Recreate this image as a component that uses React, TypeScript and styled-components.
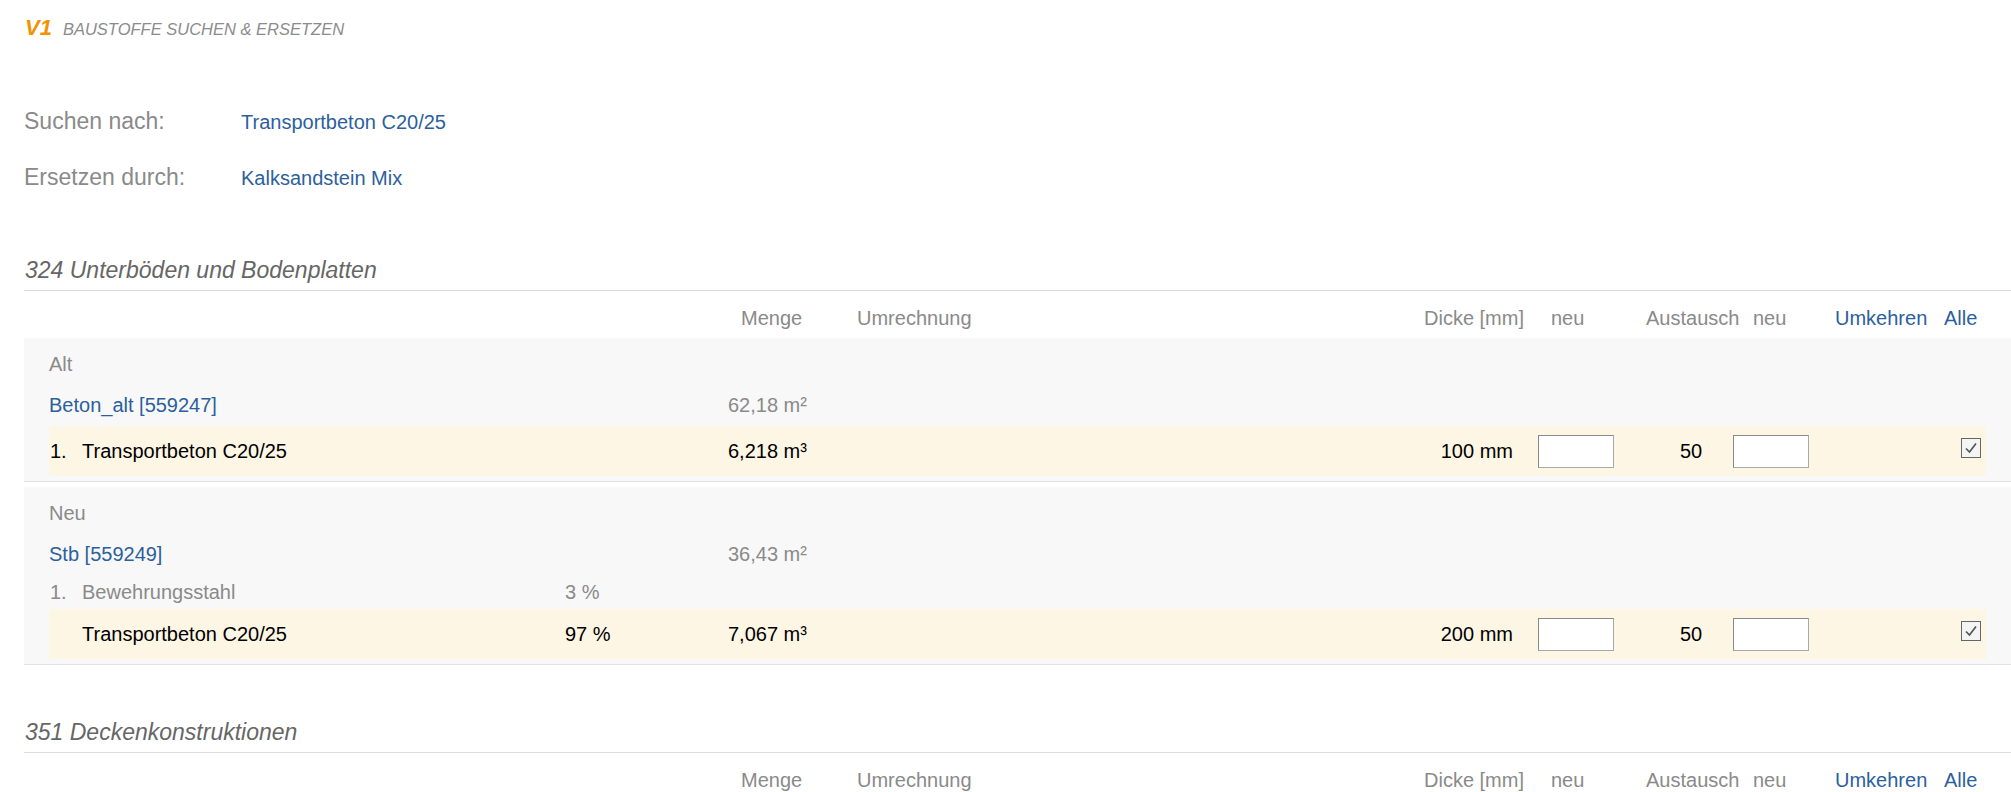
import React from "react";
import styled, { createGlobalStyle } from "styled-components";

const GlobalStyle = createGlobalStyle`
  html, body {
    margin: 0;
    padding: 0;
    background: #ffffff;
  }
  body {
    font-family: "Liberation Sans", Arial, sans-serif;
    color: #000;
  }
`;

// shared column layout for header and data rows (starts at the inner edge)
const COLS = "516px 163px 129px 567px 114px 108px 87px 102px 109px 42px";

type Material = {
  num?: string;
  name: string;
  percent?: string;
  menge?: string;
  dicke?: string;
  austausch?: string;
  main?: boolean;
};

type Block = {
  label: string;
  link: string;
  area: string;
  items: Material[];
};

const blocks: Block[] = [
  {
    label: "Alt",
    link: "Beton_alt [559247]",
    area: "62,18 m²",
    items: [
      {
        num: "1.",
        name: "Transportbeton C20/25",
        menge: "6,218 m³",
        dicke: "100 mm",
        austausch: "50",
        main: true,
      },
    ],
  },
  {
    label: "Neu",
    link: "Stb [559249]",
    area: "36,43 m²",
    items: [
      { num: "1.", name: "Bewehrungsstahl", percent: "3 %" },
      {
        name: "Transportbeton C20/25",
        percent: "97 %",
        menge: "7,067 m³",
        dicke: "200 mm",
        austausch: "50",
        main: true,
      },
    ],
  },
];

const App = () => {
  return (
    <Page>
      <GlobalStyle />
      <TopBar>
        <Version>V1</Version>
        <PageTitle>Baustoffe suchen &amp; ersetzen</PageTitle>
      </TopBar>

      <SearchBox>
        <SearchRow>
          <SearchLabel>Suchen nach:</SearchLabel>
          <SearchValue>Transportbeton C20/25</SearchValue>
        </SearchRow>
        <SearchRow>
          <SearchLabel>Ersetzen durch:</SearchLabel>
          <SearchValue>Kalksandstein Mix</SearchValue>
        </SearchRow>
      </SearchBox>

      <Section>
        <SectionTitle>324 Unterböden und Bodenplatten</SectionTitle>
        <TableHead />
        {blocks.map((b) => (
          <GroupBlock key={b.label}>
            <GroupLabel>{b.label}</GroupLabel>
            <GridRow $kind="link">
              <Cell>
                <Link>{b.link}</Link>
              </Cell>
              <Cell />
              <Cell $muted>{b.area}</Cell>
            </GridRow>
            {b.items.map((m, i) => (
              <GridRow key={i} $kind={m.main ? "main" : "plain"}>
                <Cell $muted={!m.main}>
                  <Num>{m.num}</Num>
                  {m.name}
                </Cell>
                <Cell $muted={!m.main}>{m.percent}</Cell>
                <Cell>{m.menge}</Cell>
                <Cell />
                {m.main ? (
                  <>
                    <Cell $align="right" $pr={25}>
                      {m.dicke}
                    </Cell>
                    <Cell>
                      <NumInput type="text" />
                    </Cell>
                    <Cell $align="center" $pl={3}>
                      {m.austausch}
                    </Cell>
                    <Cell>
                      <NumInput type="text" />
                    </Cell>
                    <Cell />
                    <Cell $pl={17}>
                      <Check>
                        <svg width="16" height="16" viewBox="0 0 16 16">
                          <polyline
                            points="3,8.5 6.5,12 13,3.5"
                            fill="none"
                            stroke="#555555"
                            strokeWidth="1.7"
                          />
                        </svg>
                      </Check>
                    </Cell>
                  </>
                ) : null}
              </GridRow>
            ))}
          </GroupBlock>
        ))}
      </Section>

      <Section>
        <SectionTitle>351 Deckenkonstruktionen</SectionTitle>
        <TableHead />
      </Section>
    </Page>
  );
};

const TableHead = () => (
  <HeadRow>
    <HeadCell />
    <HeadCell />
    <HeadCell $pl={13}>Menge</HeadCell>
    <HeadCell>Umrechnung</HeadCell>
    <HeadCell>Dicke [mm]</HeadCell>
    <HeadCell $pl={13}>neu</HeadCell>
    <HeadCell>Austausch</HeadCell>
    <HeadCell $pl={20}>neu</HeadCell>
    <HeadCell $link>Umkehren</HeadCell>
    <HeadCell $link>Alle</HeadCell>
  </HeadRow>
);

export default App;

const Page = styled.div`
  padding: 15px 0 0 24px;
  min-width: 1987px;
`;

const TopBar = styled.div`
  display: flex;
  align-items: baseline;
  padding-left: 1px;
`;

const Version = styled.span`
  font-size: 22px;
  font-weight: bold;
  font-style: italic;
  color: #f39200;
  margin-right: 11px;
`;

const PageTitle = styled.span`
  font-size: 16.5px;
  font-style: italic;
  text-transform: uppercase;
  color: #8c8c8c;
`;

const SearchBox = styled.div`
  margin-top: 67px;
  display: flex;
  flex-direction: column;
`;

const SearchRow = styled.div`
  display: flex;
  align-items: baseline;
  height: 56px;
`;

const SearchLabel = styled.div`
  width: 217px;
  font-size: 23px;
  color: #8a8a8a;
`;

const SearchValue = styled.div`
  font-size: 20px;
  color: #2c5f9e;
`;

const Section = styled.section`
  margin-top: 37px;

  & + & {
    margin-top: 54px;
  }
`;

const SectionTitle = styled.h2`
  margin: 0;
  padding: 0 0 7px 1px;
  font-size: 23px;
  line-height: 26px;
  font-weight: normal;
  font-style: italic;
  color: #666666;
  border-bottom: 1px solid #dcdcdc;
`;

const HeadRow = styled.div`
  display: grid;
  grid-template-columns: ${COLS};
  padding: 16px 25px 8px;
  font-size: 20px;
  line-height: 23px;
  white-space: nowrap;
`;

const HeadCell = styled.div<{ $pl?: number; $link?: boolean }>`
  padding-left: ${(p) => p.$pl ?? 0}px;
  color: ${(p) => (p.$link ? "#2c5f9e" : "#8a8a8a")};
`;

const GroupBlock = styled.div`
  background: #f8f8f8;
  padding: 10px 25px 5px;
  border-bottom: 1px solid #e2e2e2;
  margin-bottom: 5px;
`;

const GroupLabel = styled.div`
  height: 32px;
  display: flex;
  align-items: center;
  font-size: 20px;
  color: #8a8a8a;
`;

const GridRow = styled.div<{ $kind: "link" | "plain" | "main" }>`
  display: grid;
  grid-template-columns: ${COLS};
  align-items: center;
  box-sizing: border-box;
  font-size: 20px;
  line-height: 23px;
  white-space: nowrap;
  height: ${(p) => (p.$kind === "main" ? 50 : p.$kind === "link" ? 46 : 34)}px;
  padding-top: ${(p) => (p.$kind === "link" ? 4 : 0)}px;
  background: ${(p) => (p.$kind === "main" ? "#fdf6e4" : "transparent")};
  color: ${(p) => (p.$kind === "main" ? "#000000" : "#8a8a8a")};
`;

const Cell = styled.div<{
  $align?: "left" | "right" | "center";
  $pl?: number;
  $pr?: number;
  $muted?: boolean;
}>`
  display: flex;
  align-items: center;
  justify-content: ${(p) =>
    p.$align === "right" ? "flex-end" : p.$align === "center" ? "center" : "flex-start"};
  padding-left: ${(p) => p.$pl ?? 0}px;
  padding-right: ${(p) => p.$pr ?? 0}px;
  ${(p) => (p.$muted ? "color: #8a8a8a;" : "")}
`;

const Num = styled.span`
  display: inline-block;
  width: 33px;
  padding-left: 1px;
  box-sizing: border-box;
`;

const Link = styled.span`
  color: #2c5f9e;
  cursor: pointer;
`;

const NumInput = styled.input`
  width: 76px;
  height: 33px;
  box-sizing: border-box;
  margin: 0;
  padding: 2px 4px;
  background: #ffffff;
  border: 1px solid #a9a9a9;
  border-top-color: #8a8a8a;
  border-left-color: #8a8a8a;
  font-family: "Liberation Sans", Arial, sans-serif;
  font-size: 18px;
  outline: none;
`;

const Check = styled.span`
  display: flex;
  align-items: center;
  justify-content: center;
  width: 20px;
  height: 20px;
  box-sizing: border-box;
  margin-bottom: 6px;
  border: 1.5px solid #666666;
  background: #f4f4f4;
`;
